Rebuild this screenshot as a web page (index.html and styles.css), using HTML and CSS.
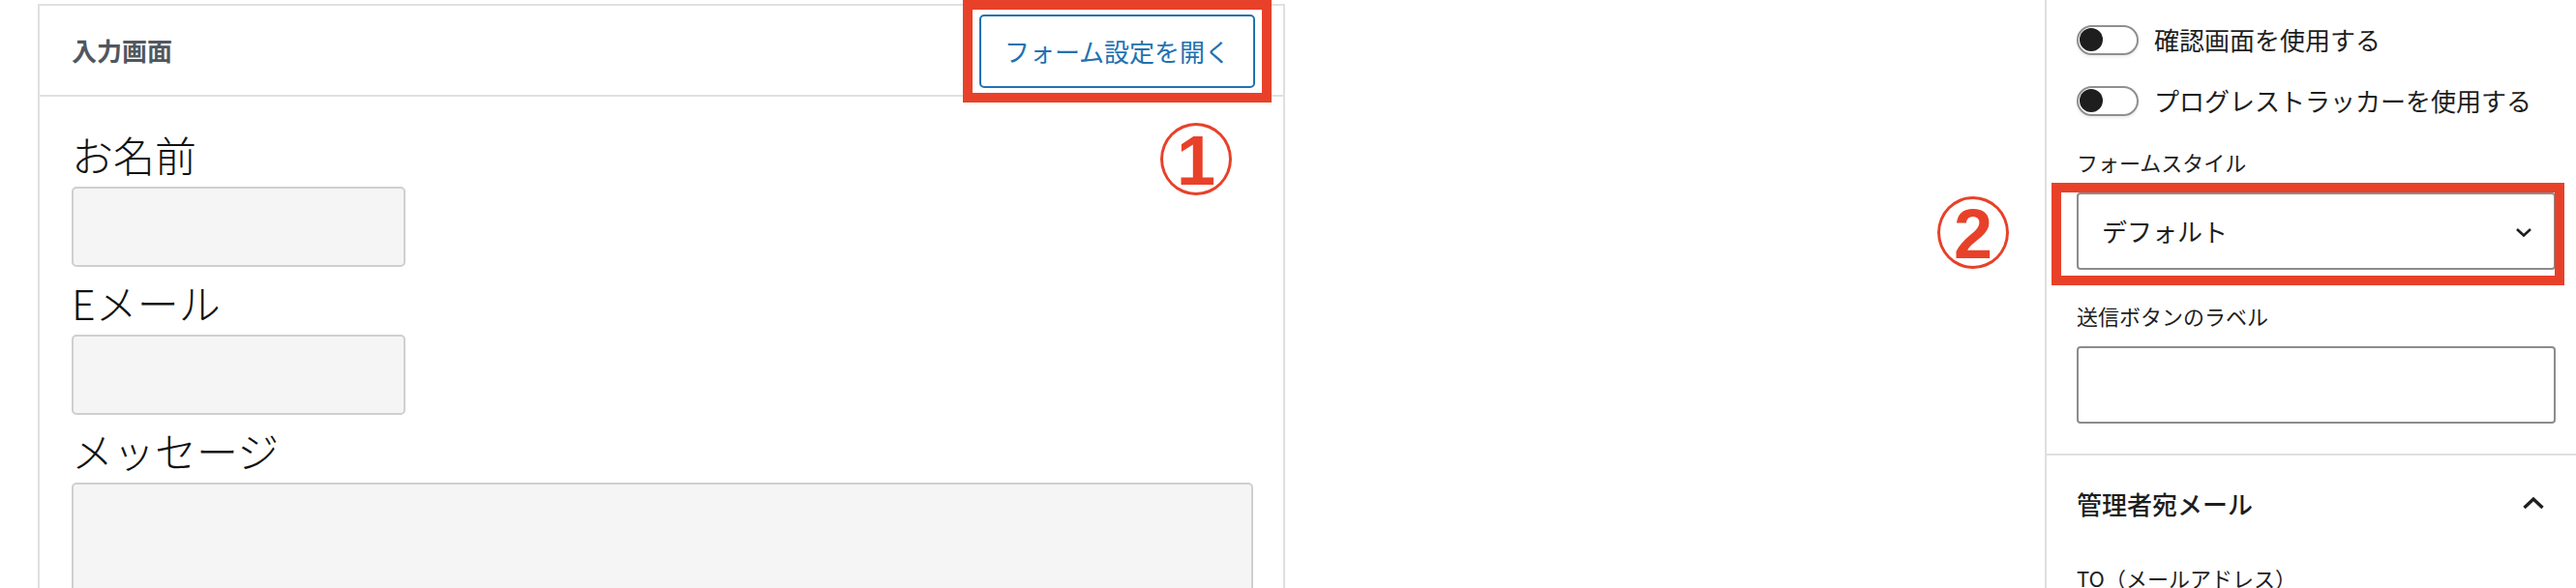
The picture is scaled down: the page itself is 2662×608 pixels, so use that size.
FILE: index.html
```html
<!DOCTYPE html>
<html lang="ja">
<head>
<meta charset="utf-8">
<title>フォーム</title>
<link rel="stylesheet" href="styles.css">
</head>
<body>
<div class="app">
  <main class="canvas">
    <section class="card">
      <header class="card-head">
        <h2 class="card-title">入力画面</h2>
        <button class="btn-outline" type="button">フォーム設定を開く</button>
      </header>
      <div class="card-body">
        <div class="field">
          <label class="f-label">お名前</label>
          <div class="f-input"></div>
        </div>
        <div class="field">
          <label class="f-label">Eメール</label>
          <div class="f-input"></div>
        </div>
        <div class="field">
          <label class="f-label">メッセージ</label>
          <div class="f-textarea"></div>
        </div>
      </div>
    </section>
  </main>
  <aside class="sidebar">
    <div class="panel-body">
      <div class="toggle-row">
        <span class="toggle"><span class="thumb"></span></span>
        <span class="toggle-label">確認画面を使用する</span>
      </div>
      <div class="toggle-row">
        <span class="toggle"><span class="thumb"></span></span>
        <span class="toggle-label">プログレストラッカーを使用する</span>
      </div>
      <div class="s-field">
        <label class="s-label">フォームスタイル</label>
        <div class="s-select">
          <span class="s-select-value">デフォルト</span>
          <svg class="chev-down" width="18" height="11" viewBox="0 0 18 11"><path d="M2 2 L9 8.5 L16 2" fill="none" stroke="#1e1e1e" stroke-width="2.6"/></svg>
        </div>
      </div>
      <div class="s-field">
        <label class="s-label">送信ボタンのラベル</label>
        <div class="s-input"></div>
      </div>
    </div>
    <div class="panel">
      <div class="panel-head">
        <span class="panel-title">管理者宛メール</span>
        <svg class="chev-up" width="24" height="15" viewBox="0 0 24 15"><path d="M2.5 12 L12 3 L21.5 12" fill="none" stroke="#1e1e1e" stroke-width="3.4"/></svg>
      </div>
      <div class="panel-content">
        <label class="s-label">TO（メールアドレス）</label>
      </div>
    </div>
  </aside>
</div>
<div class="mark-box mark-box-1"></div>
<div class="mark-box mark-box-2"></div>
<div class="mark-num mark-num-1"><span>1</span></div>
<div class="mark-num mark-num-2"><span>2</span></div>
</body>
</html>
```

FILE: styles.css
```css
* { box-sizing: border-box; }
html, body { margin: 0; padding: 0; background: #fff; }
body {
  width: 2662px;
  height: 608px;
  overflow: hidden;
  position: relative;
  font-family: "Noto Sans CJK JP", "Noto Sans", sans-serif;
  color: #1e1e1e;
}
.app {
  display: flex;
  height: 608px;
  overflow: hidden;
}
.canvas {
  flex: 1;
  padding: 4px 0 0 39px;
}
.card {
  width: 1289px;
  border: 2px solid #e0e0e0;
  border-bottom: none;
  background: #fff;
}
.card-head {
  height: 94px;
  display: flex;
  align-items: center;
  justify-content: space-between;
  padding: 0 29px 0 33px;
  border-bottom: 2px solid #e0e0e0;
}
.card-title {
  margin: 0;
  font-size: 26px;
  font-weight: 700;
  color: #50575e;
  line-height: 36px;
}
.btn-outline {
  width: 285px;
  height: 76px;
  border: 2px solid #2271b1;
  border-radius: 5px;
  background: #fff;
  color: #2271b1;
  font-family: "Noto Sans CJK JP", sans-serif;
  font-size: 26px;
  line-height: 1;
  padding: 0;
  margin-top: 2px;
}
.card-body {
  padding: 34px 31px 0 33px;
  display: flex;
  flex-direction: column;
  gap: 11px;
}
.field {
  display: flex;
  flex-direction: column;
  align-items: flex-start;
}
.f-label {
  font-size: 43px;
  font-weight: 300;
  line-height: 50px;
  margin-bottom: 9px;
  color: #111;
}
.f-input {
  width: 345px;
  height: 83px;
  background: #f5f5f5;
  border: 2px solid #cfcfcf;
  border-radius: 5px;
}
.f-textarea {
  align-self: stretch;
  height: 240px;
  background: #f5f5f5;
  border: 2px solid #cfcfcf;
  border-radius: 5px;
}
.sidebar {
  width: 549px;
  flex: none;
  border-left: 2px solid #e0e0e0;
  background: #fff;
}
.panel-body {
  padding: 25px 21px 31px 31px;
  display: flex;
  flex-direction: column;
  gap: 31px;
  border-bottom: 2px solid #e0e0e0;
}
.toggle-row {
  display: flex;
  align-items: center;
  height: 32px;
}
.toggle {
  width: 64px;
  height: 31px;
  border: 2px solid #8f8f8f;
  border-radius: 16px;
  background: #fff;
  padding: 1px;
  display: flex;
  align-items: center;
  box-shadow: 0 2px 3px rgba(0,0,0,0.08);
}
.thumb {
  width: 24px;
  height: 24px;
  border-radius: 50%;
  background: #1e1e1e;
}
.toggle-label {
  margin-left: 16px;
  font-size: 26px;
  line-height: 32px;
  color: #1e1e1e;
}
.s-field {
  display: flex;
  flex-direction: column;
}
.s-label {
  font-size: 22px;
  line-height: 32px;
  margin-bottom: 16px;
  color: #1e1e1e;
}
.s-select {
  height: 80px;
  border: 2px solid #8c8c8c;
  border-radius: 4px;
  display: flex;
  align-items: center;
  justify-content: space-between;
  padding: 0 22px 0 24px;
}
.s-select-value {
  font-size: 26px;
  line-height: 32px;
}
.chev-down { display: block; margin-top: 3px; }
.s-input {
  height: 80px;
  border: 2px solid #8c8c8c;
  border-radius: 4px;
}
.panel {
  padding: 0 21px 0 31px;
}
.panel-head {
  display: flex;
  align-items: center;
  justify-content: space-between;
  padding: 32px 11px 32px 0;
}
.panel-title {
  font-size: 26px;
  line-height: 36px;
  font-weight: 500;
}
.chev-up { display: block; margin-top: -2px; }
.panel-content {
  padding-top: 10px;
}
.mark-box {
  position: absolute;
  border: 10px solid #e8412a;
}
.mark-box-1 {
  left: 995px;
  top: 0;
  width: 319px;
  height: 106px;
}
.mark-box-2 {
  left: 2120px;
  top: 189px;
  width: 530px;
  height: 106px;
}
.mark-num {
  position: absolute;
  width: 74px;
  height: 75px;
  border: 3px solid #e8412a;
  border-radius: 50%;
  display: flex;
  align-items: center;
  justify-content: center;
  color: #e8412a;
  font-family: "Liberation Sans", Arial, sans-serif;
  font-weight: 700;
  font-size: 72px;
  line-height: 1;
}
.mark-num span { display: block; margin-top: 2px; }
.mark-num-1 { left: 1199px; top: 127px; }
.mark-num-2 { left: 2002px; top: 203px; }
```
